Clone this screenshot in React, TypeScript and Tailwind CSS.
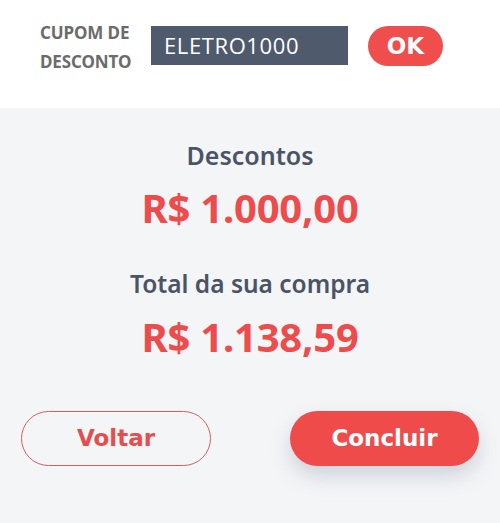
import React from 'react';

const heading = "font-['Noto_Sans',sans-serif]";
const button = "font-['DejaVu_Sans',sans-serif]";

const Resumo = () => {
  return (
    <div className="w-[500px] h-[523px] flex flex-col bg-[#f4f5f7]">
      <div className="h-[108px] bg-white flex items-start pt-[18px] pl-[40px]">
        <div className={`${heading} w-[92px] text-[17px] font-bold leading-[29px] text-[#6b6b6b] tracking-[-0.1px]`}>
          CUPOM DE
          <br />
          DESCONTO
        </div>
        <div className="ml-[19px] mt-[8px] w-[197px] h-[39px] bg-[#4f5a6c] flex items-center pl-[13px]">
          <span className="font-['Open_Sans',sans-serif] text-[22px] font-normal text-white tracking-[0.6px]">ELETRO1000</span>
        </div>
        <button className={`${button} ml-[20px] mt-[8px] w-[75px] h-[40px] rounded-full bg-[#f04d4d] text-white text-[23px] font-bold`}>
          OK
        </button>
      </div>

      <div className="flex flex-col items-center pt-[31px]">
        <div className={`${heading} text-[25px] font-semibold leading-[32px] text-[#4b5466]`}>Descontos</div>
        <div className={`${heading} mt-[13px] text-[40px] font-bold leading-[48px] text-[#ee4c4c] tracking-[-0.2px]`}>R$ 1.000,00</div>
        <div className={`${heading} mt-[36px] text-[24.5px] font-semibold leading-[32px] text-[#4b5466]`}>Total da sua compra</div>
        <div className={`${heading} mt-[13px] text-[40px] font-bold leading-[48px] text-[#ee4c4c] tracking-[-0.2px]`}>R$ 1.138,59</div>
      </div>

      <div className="flex justify-between px-[21px] mt-[50px]">
        <button className={`${button} w-[190px] h-[55px] rounded-full border border-[#d26060] text-[#e24f4f] text-[23px] font-bold`}>
          Voltar
        </button>
        <button className={`${button} w-[189px] h-[55px] rounded-full bg-[#f04b4b] text-white text-[23px] font-bold shadow-[0_10px_20px_rgba(100,110,140,0.25)]`}>
          Concluir
        </button>
      </div>
    </div>
  );
};

export default function App() {
  return <Resumo />;
}
